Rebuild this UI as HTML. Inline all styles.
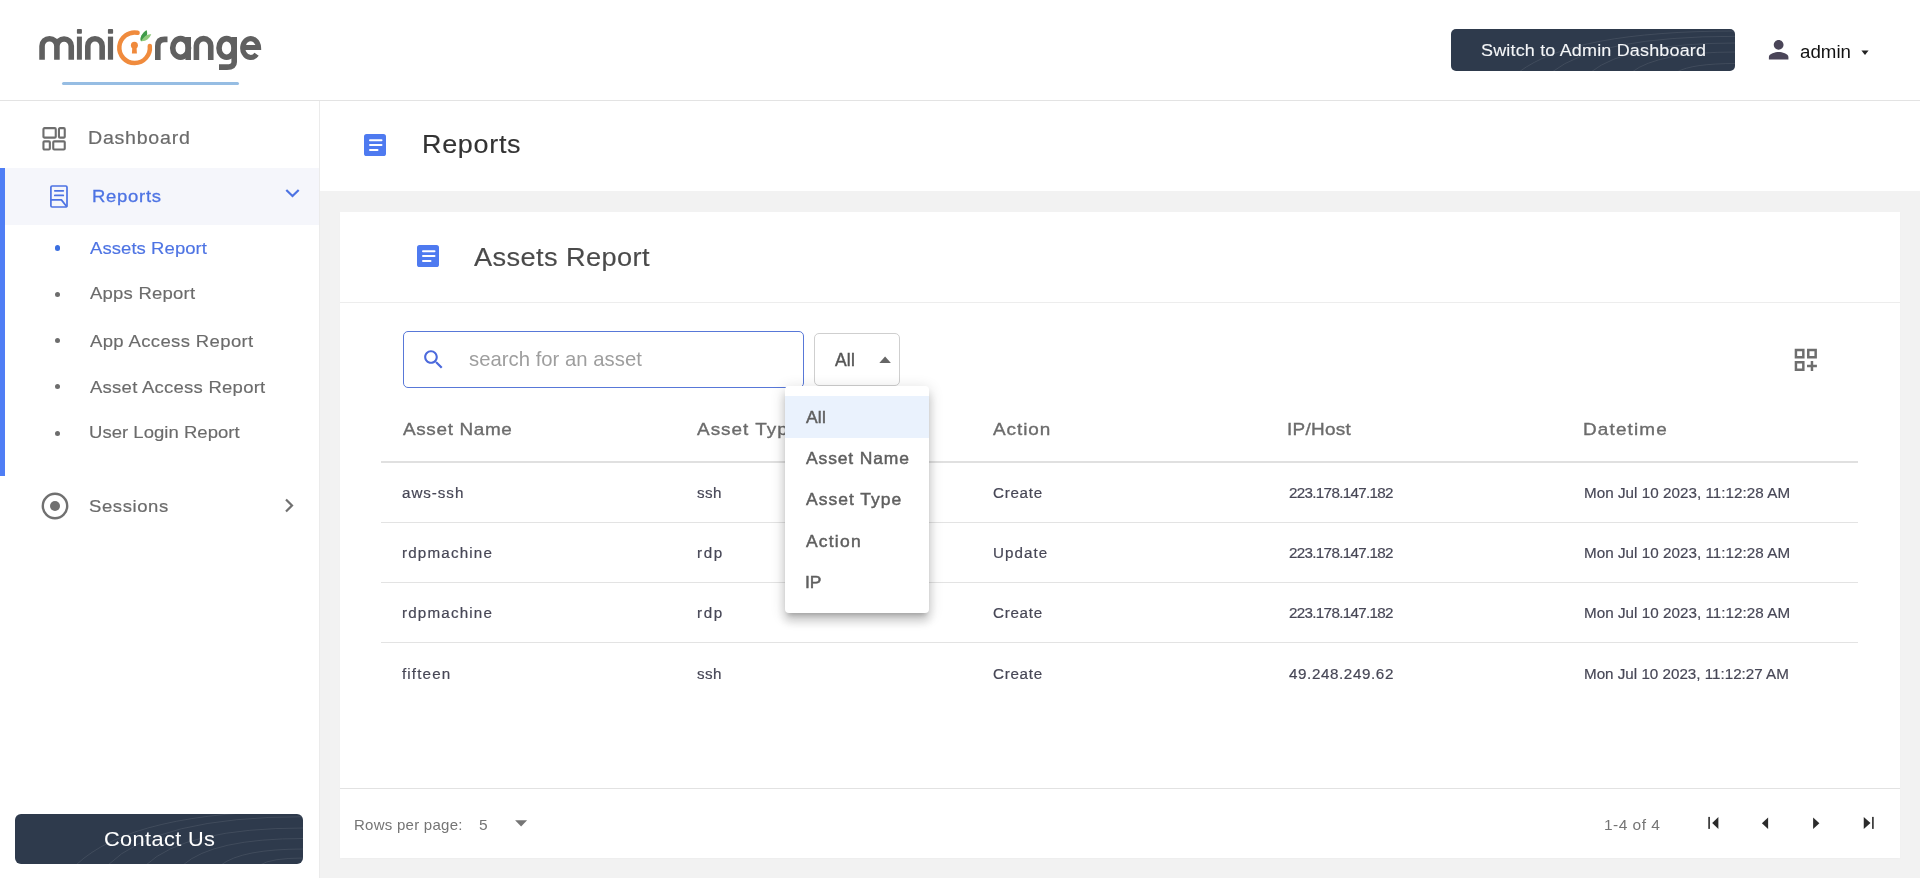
<!DOCTYPE html>
<html><head><meta charset="utf-8">
<style>
*{margin:0;padding:0;box-sizing:border-box}
html,body{width:1920px;height:878px;overflow:hidden;background:#f2f2f2;font-family:"Liberation Sans",sans-serif}
.a{position:absolute}
.t{position:absolute;white-space:nowrap;line-height:1;will-change:transform}
</style></head><body>
<div class="a" style="left:0px;top:0px;width:1920px;height:100px;background:#fff"></div>
<div class="a" style="left:0px;top:100px;width:1920px;height:1px;background:#e3e3e3"></div>
<div class="a" style="left:0px;top:101px;width:319px;height:777px;background:#fff"></div>
<div class="a" style="left:319px;top:101px;width:1px;height:777px;background:#ebebeb"></div>
<div class="a" style="left:320px;top:101px;width:1600px;height:90px;background:#fff"></div>
<div class="a" style="left:340px;top:212px;width:1560px;height:646px;background:#fff;box-shadow:0 1px 2px rgba(0,0,0,0.025)"></div>
<div class="a" style="left:340px;top:302px;width:1560px;height:1px;background:#ededed"></div>
<div class="a" style="left:340px;top:788px;width:1560px;height:1px;background:#e2e2e2"></div>
<svg class="a" style="left:0;top:0" width="300" height="100" viewBox="0 0 300 100">
 <g fill="none" stroke="#606060" stroke-width="5.6">
  <path d="M42.05,59.7 V46.1 A7.425,7.425 0 0 1 56.9,46.1 V59.7 M56.9,46.1 A7.175,7.175 0 0 1 71.25,46.1 V59.7"/>
  <path d="M87.8,59.7 V45.9 A7.175,7.175 0 0 1 102.15,45.9 V59.7"/>
  <path d="M157.8,60 V46 Q157.8,39.4 164.5,39.4 H167.5"/>
  <ellipse cx="180.6" cy="47.95" rx="7.9" ry="9.3"/>
  <path d="M188.2,37 V60"/>
  <path d="M196.4,60 V45.8 A7.175,7.175 0 0 1 210.75,45.8 V60"/>
  <ellipse cx="226.6" cy="47.95" rx="7.6" ry="9.3"/>
  <path d="M234.2,37 V62 Q234.2,67.1 227,67.1 H219"/>
  <path d="M242.5,47.5 H258.5 A7.875,9.45 0 1 0 256.6,54.2" stroke-width="5.2"/>
 </g>
 <g fill="#606060">
  <rect x="76.9" y="36.6" width="5" height="23.1"/><rect x="76.9" y="29.1" width="5" height="4.7" rx="0.8"/>
  <rect x="107.9" y="36.6" width="5.2" height="23.1"/><rect x="107.9" y="29.1" width="5.2" height="4.7" rx="0.8"/>
 </g>
 <path d="M137.6,32.75 A15.3,15.3 0 1 0 149.8,46.0" fill="none" stroke="#f08b3d" stroke-width="4.5" stroke-linecap="round"/>
 <circle cx="134.4" cy="45.3" r="3.5" fill="#f08a3c"/>
 <path d="M132.4,46 L131.9,53.6 H136.9 L136.4,46 Z" fill="#f08a3c"/>
 <path d="M141,41.3 C139.6,37.5 142,33.6 146.4,30.3 C147.3,32 147.3,33.8 146.9,35.1 C148.5,34.4 150,34.1 151.3,34.3 C149.6,38.2 146.5,41.6 141,41.3 Z" fill="#8fcb7c"/>
 <path d="M141,41.3 C139.6,37.5 142,33.6 146.4,30.3 C147.3,32 147.3,33.8 146.9,35.1 C144.8,36.3 142.8,38.6 141,41.3 Z" fill="#3f9a4a"/>
 <path d="M63.5,83.5 H237.5" stroke="#96bde3" stroke-width="3" stroke-linecap="round"/>
</svg>
<div class="a" style="left:1451px;top:29px;width:284px;height:42px;background:#2e3a4c;border-radius:5px;overflow:hidden"><svg class="a" style="left:0;top:0" width="284" height="42" viewBox="0 0 284 42"><g fill="none" stroke="#ffffff" stroke-opacity="0.09" stroke-width="1"><path d="M68.0,43 Q122.0,2.0 285,2.0"/><path d="M101.0,43 Q146.8,7.3 285,7.3"/><path d="M140.0,43 Q176.0,14.0 285,14.0"/><path d="M181.0,43 Q206.8,23.0 285,23.0"/><path d="M226.0,43 Q240.5,34.5 285,34.5"/></g></svg></div>
<div class="t" style="left:1480.80px;top:42.93px;font-size:16.8px;color:#f4f6f8;letter-spacing:0.171px;transform:scaleX(1.07);transform-origin:0 0;-webkit-text-stroke:0.1px #f4f6f8;">Switch to Admin Dashboard</div>
<svg class="a" style="left:1763.5px;top:35.4px" width="29.3" height="29.3" viewBox="0 0 24 24"><path fill="#4a4558" d="M12 12c2.21 0 4-1.79 4-4s-1.79-4-4-4-4 1.79-4 4 1.79 4 4 4zm0 2c-2.67 0-8 1.34-8 4v2h16v-2c0-2.66-5.33-4-8-4z"/></svg>
<div class="t" style="left:1799.80px;top:42.97px;font-size:18.7px;color:#111;letter-spacing:0.015px;">admin</div>
<svg class="a" style="left:1861px;top:50px" width="8" height="6" viewBox="0 0 8 6"><path d="M0.4,0.6 H7.6 L4,5 Z" fill="#222"/></svg>
<svg class="a" style="left:40px;top:125px" width="28" height="28" viewBox="0 0 28 28"><g fill="none" stroke="#6e6e6e" stroke-width="2.1"><rect x="3.45" y="3.15" width="12.3" height="9.5" rx="1"/><rect x="18.95" y="3.15" width="5.8" height="9.5" rx="1"/><rect x="3.45" y="16.35" width="6.4" height="8.1" rx="1"/><rect x="13.25" y="16.35" width="11.5" height="8.1" rx="1"/></g></svg>
<div class="t" style="left:87.50px;top:129.68px;font-size:17.5px;color:#6b6b6b;letter-spacing:0.660px;transform:scaleX(1.12);transform-origin:0 0;-webkit-text-stroke:0.2px #6b6b6b;">Dashboard</div>
<div class="a" style="left:0px;top:168px;width:319px;height:57px;background:#f5f6fb"></div>
<div class="a" style="left:0px;top:168px;width:5px;height:308px;background:#4f7ef5"></div>
<svg class="a" style="left:48px;top:183px" width="22" height="27" viewBox="0 0 22 27"><g fill="none" stroke="#4d73e3" stroke-width="1.7" stroke-linejoin="round"><rect x="2.9" y="3.0" width="16.1" height="21.0" rx="1.2"/><path d="M6.8,7.8 H15.3 M6.8,12.4 H15.3" stroke-linecap="round"/><path d="M2.9,16.9 H13.4 L19,24"/></g></svg>
<div class="t" style="left:92.20px;top:188.05px;font-size:17.3px;color:#4d73e3;letter-spacing:0.669px;transform:scaleX(1.07);transform-origin:0 0;-webkit-text-stroke:0.3px #4d73e3;">Reports</div>
<svg class="a" style="left:282px;top:186px" width="20" height="14" viewBox="0 0 20 14"><path d="M4.3,4 L10.5,10 L16.7,4" fill="none" stroke="#4d73e3" stroke-width="2.2"/></svg>
<div class="t" style="left:90.30px;top:239.75px;font-size:17.3px;color:#4d73e3;letter-spacing:0.066px;transform:scaleX(1.07);transform-origin:0 0;-webkit-text-stroke:0.15px #4d73e3;">Assets Report</div>
<div class="a" style="left:55px;top:245.4px;width:5.2px;height:5.2px;border-radius:50%;background:#3b6fe0"></div>
<div class="t" style="left:90.30px;top:285.15px;font-size:17.3px;color:#6b6b6b;letter-spacing:0.215px;transform:scaleX(1.07);transform-origin:0 0;-webkit-text-stroke:0.15px #6b6b6b;">Apps Report</div>
<div class="a" style="left:55px;top:291.7px;width:5.2px;height:5.2px;border-radius:50%;background:#6d6d6d"></div>
<div class="t" style="left:90.20px;top:333.25px;font-size:17.3px;color:#6b6b6b;letter-spacing:0.349px;transform:scaleX(1.07);transform-origin:0 0;-webkit-text-stroke:0.15px #6b6b6b;">App Access Report</div>
<div class="a" style="left:55px;top:338.3px;width:5.2px;height:5.2px;border-radius:50%;background:#6d6d6d"></div>
<div class="t" style="left:90.20px;top:379.00px;font-size:17.3px;color:#6b6b6b;letter-spacing:0.240px;transform:scaleX(1.07);transform-origin:0 0;-webkit-text-stroke:0.15px #6b6b6b;">Asset Access Report</div>
<div class="a" style="left:55px;top:384.3px;width:5.2px;height:5.2px;border-radius:50%;background:#6d6d6d"></div>
<div class="t" style="left:88.60px;top:424.45px;font-size:17.3px;color:#6b6b6b;letter-spacing:0.034px;transform:scaleX(1.07);transform-origin:0 0;-webkit-text-stroke:0.15px #6b6b6b;">User Login Report</div>
<div class="a" style="left:55px;top:430.6px;width:5.2px;height:5.2px;border-radius:50%;background:#6d6d6d"></div>
<svg class="a" style="left:40px;top:491px" width="30" height="30" viewBox="0 0 30 30"><circle cx="15" cy="15" r="12.2" fill="none" stroke="#707070" stroke-width="2.4"/><circle cx="15" cy="15" r="5" fill="#707070"/></svg>
<div class="t" style="left:89.00px;top:497.85px;font-size:17.3px;color:#6b6b6b;letter-spacing:0.558px;transform:scaleX(1.07);transform-origin:0 0;-webkit-text-stroke:0.2px #6b6b6b;">Sessions</div>
<svg class="a" style="left:280px;top:495px" width="18" height="20" viewBox="0 0 18 20"><path d="M6,4.5 L12,10.5 L6,16.5" fill="none" stroke="#707070" stroke-width="2.2"/></svg>
<div class="a" style="left:15px;top:814px;width:288px;height:50px;background:#2e3a4c;border-radius:6px;overflow:hidden"><svg class="a" style="left:0;top:0" width="288" height="50" viewBox="0 0 288 50"><g fill="none" stroke="#ffffff" stroke-opacity="0.09" stroke-width="1"><path d="M61.0,51 Q117.8,-3.0 289,-3.0"/><path d="M93.0,51 Q141.8,2.7 289,2.7"/><path d="M131.0,51 Q170.2,14.0 289,14.0"/><path d="M168.0,51 Q198.0,24.5 289,24.5"/><path d="M206.0,51 Q226.5,35.0 289,35.0"/><path d="M245.0,51 Q255.8,44.0 289,44.0"/></g></svg></div>
<div class="t" style="left:104.00px;top:829.06px;font-size:20.3px;color:#fff;letter-spacing:0.371px;transform:scaleX(1.07);transform-origin:0 0;-webkit-text-stroke:0.05px #fff;">Contact Us</div>
<svg class="a" style="left:364px;top:134px" width="22" height="22" viewBox="0 0 22 22"><rect x="0" y="0" width="22" height="22" rx="2.6" fill="#4e7af0"/><path d="M6,6.2 H17.5 M6,11 H17.5 M6,16 H13.5" stroke="#fff" stroke-width="2" stroke-linecap="round"/></svg>
<div class="t" style="left:421.60px;top:131.67px;font-size:25.2px;color:#333;letter-spacing:0.654px;transform:scaleX(1.07);transform-origin:0 0;-webkit-text-stroke:0.15px #333;">Reports</div>
<svg class="a" style="left:417px;top:245px" width="22" height="22" viewBox="0 0 22 22"><rect x="0" y="0" width="22" height="22" rx="2.6" fill="#4e7af0"/><path d="M6,6.2 H17.5 M6,11 H17.5 M6,16 H13.5" stroke="#fff" stroke-width="2" stroke-linecap="round"/></svg>
<div class="t" style="left:473.60px;top:245.20px;font-size:25.4px;color:#4a4a4a;letter-spacing:0.376px;transform:scaleX(1.07);transform-origin:0 0;-webkit-text-stroke:0.15px #4a4a4a;">Assets Report</div>
<div class="a" style="left:403px;top:331px;width:401px;height:57px;border:1px solid #5878d8;border-radius:5px;background:#fff"></div>
<svg class="a" style="left:420.7px;top:346.8px" width="25.2" height="25.2" viewBox="0 0 24 24"><path fill="#4b69dc" d="M15.5 14h-.79l-.28-.27C15.41 12.59 16 11.11 16 9.5 16 5.91 13.09 3 9.5 3S3 5.91 3 9.5 5.91 16 9.5 16c1.61 0 3.09-.59 4.23-1.57l.27.28v.79l5 4.99L20.49 19l-4.99-5zm-6 0C7.01 14 5 11.99 5 9.5S7.01 5 9.5 5 14 7.01 14 9.5 11.99 14 9.5 14z"/></svg>
<div class="t" style="left:469.10px;top:348.71px;font-size:20.3px;color:#9e9e9e;letter-spacing:0.020px;">search for an asset</div>
<div class="a" style="left:814px;top:333px;width:86px;height:53px;border:1px solid #cfcfcf;border-radius:5px;background:#fff"></div>
<div class="t" style="left:834.70px;top:352.08px;font-size:17.5px;color:#555;letter-spacing:0.179px;-webkit-text-stroke:0.4px #555;">All</div>
<svg class="a" style="left:878px;top:355px" width="14" height="9" viewBox="0 0 14 9"><path d="M1.3,8 H12.9 L7.1,1.6 Z" fill="#666"/></svg>
<svg class="a" style="left:1790.5px;top:344.7px" width="29.6" height="29.6" viewBox="0 0 24 24"><path fill="#6e6e6e" d="M3 11h8V3H3v8zm2-6h4v4H5V5zm8-2v8h8V3h-8zm6 6h-4V5h4v4zM3 21h8v-8H3v8zm2-6h4v4H5v-4zm13-2h-2v3h-3v2h3v3h2v-3h3v-2h-3z"/></svg>
<div class="a" style="left:381px;top:461px;width:1477px;height:2px;background:#e0e0e0"></div>
<div class="a" style="left:381px;top:522px;width:1477px;height:1px;background:#e3e3e3"></div>
<div class="a" style="left:381px;top:582px;width:1477px;height:1px;background:#e3e3e3"></div>
<div class="a" style="left:381px;top:642px;width:1477px;height:1px;background:#e3e3e3"></div>
<div class="t" style="left:402.60px;top:421.99px;font-size:16.9px;color:#6b6b6b;letter-spacing:0.577px;transform:scaleX(1.12);transform-origin:0 0;-webkit-text-stroke:0.35px #6b6b6b;">Asset Name</div>
<div class="t" style="left:697.30px;top:421.99px;font-size:16.9px;color:#6b6b6b;transform:scaleX(1.12);transform-origin:0 0;-webkit-text-stroke:0.35px #6b6b6b;letter-spacing:0.9px;">Asset Type</div>
<div class="t" style="left:992.80px;top:421.99px;font-size:16.9px;color:#6b6b6b;letter-spacing:0.839px;transform:scaleX(1.12);transform-origin:0 0;-webkit-text-stroke:0.35px #6b6b6b;">Action</div>
<div class="t" style="left:1287.20px;top:421.99px;font-size:16.9px;color:#6b6b6b;letter-spacing:0.258px;transform:scaleX(1.12);transform-origin:0 0;-webkit-text-stroke:0.35px #6b6b6b;">IP/Host</div>
<div class="t" style="left:1582.75px;top:421.99px;font-size:16.9px;color:#6b6b6b;letter-spacing:1.023px;transform:scaleX(1.12);transform-origin:0 0;-webkit-text-stroke:0.35px #6b6b6b;">Datetime</div>
<div class="t" style="left:401.90px;top:484.83px;font-size:15.2px;color:#474756;letter-spacing:0.941px;-webkit-text-stroke:0.2px #474756;">aws-ssh</div>
<div class="t" style="left:697.30px;top:484.83px;font-size:15.2px;color:#474756;letter-spacing:0.424px;-webkit-text-stroke:0.2px #474756;">ssh</div>
<div class="t" style="left:992.80px;top:484.83px;font-size:15.2px;color:#474756;letter-spacing:0.717px;-webkit-text-stroke:0.2px #474756;">Create</div>
<div class="t" style="left:1288.70px;top:484.83px;font-size:15.2px;color:#474756;letter-spacing:-0.679px;-webkit-text-stroke:0.2px #474756;">223.178.147.182</div>
<div class="t" style="left:1583.75px;top:484.83px;font-size:15.2px;color:#474756;letter-spacing:0.044px;-webkit-text-stroke:0.2px #474756;">Mon Jul 10 2023, 11:12:28 AM</div>
<div class="t" style="left:401.90px;top:545.33px;font-size:15.2px;color:#474756;letter-spacing:1.176px;-webkit-text-stroke:0.2px #474756;">rdpmachine</div>
<div class="t" style="left:697.30px;top:545.33px;font-size:15.2px;color:#474756;letter-spacing:1.668px;-webkit-text-stroke:0.2px #474756;">rdp</div>
<div class="t" style="left:992.80px;top:545.33px;font-size:15.2px;color:#474756;letter-spacing:1.036px;-webkit-text-stroke:0.2px #474756;">Update</div>
<div class="t" style="left:1288.70px;top:545.33px;font-size:15.2px;color:#474756;letter-spacing:-0.679px;-webkit-text-stroke:0.2px #474756;">223.178.147.182</div>
<div class="t" style="left:1583.75px;top:545.33px;font-size:15.2px;color:#474756;letter-spacing:0.044px;-webkit-text-stroke:0.2px #474756;">Mon Jul 10 2023, 11:12:28 AM</div>
<div class="t" style="left:401.90px;top:605.03px;font-size:15.2px;color:#474756;letter-spacing:1.176px;-webkit-text-stroke:0.2px #474756;">rdpmachine</div>
<div class="t" style="left:697.30px;top:605.03px;font-size:15.2px;color:#474756;letter-spacing:1.668px;-webkit-text-stroke:0.2px #474756;">rdp</div>
<div class="t" style="left:992.80px;top:605.03px;font-size:15.2px;color:#474756;letter-spacing:0.717px;-webkit-text-stroke:0.2px #474756;">Create</div>
<div class="t" style="left:1288.70px;top:605.03px;font-size:15.2px;color:#474756;letter-spacing:-0.679px;-webkit-text-stroke:0.2px #474756;">223.178.147.182</div>
<div class="t" style="left:1583.75px;top:605.03px;font-size:15.2px;color:#474756;letter-spacing:0.044px;-webkit-text-stroke:0.2px #474756;">Mon Jul 10 2023, 11:12:28 AM</div>
<div class="t" style="left:401.90px;top:666.03px;font-size:15.2px;color:#474756;letter-spacing:1.133px;-webkit-text-stroke:0.2px #474756;">fifteen</div>
<div class="t" style="left:697.30px;top:666.03px;font-size:15.2px;color:#474756;letter-spacing:0.424px;-webkit-text-stroke:0.2px #474756;">ssh</div>
<div class="t" style="left:992.80px;top:666.03px;font-size:15.2px;color:#474756;letter-spacing:0.717px;-webkit-text-stroke:0.2px #474756;">Create</div>
<div class="t" style="left:1288.70px;top:666.03px;font-size:15.2px;color:#474756;letter-spacing:0.600px;-webkit-text-stroke:0.2px #474756;">49.248.249.62</div>
<div class="t" style="left:1583.75px;top:666.03px;font-size:15.2px;color:#474756;letter-spacing:-0.002px;-webkit-text-stroke:0.2px #474756;">Mon Jul 10 2023, 11:12:27 AM</div>
<div class="t" style="left:354.40px;top:817.00px;font-size:15px;color:#757575;letter-spacing:0.257px;">Rows per page:</div>
<div class="t" style="left:479.20px;top:816.78px;font-size:15.5px;color:#757575;">5</div>
<svg class="a" style="left:514px;top:819px" width="14" height="9" viewBox="0 0 14 9"><path d="M1.1,1.3 H13.1 L7.1,7.6 Z" fill="#757575"/></svg>
<div class="t" style="left:1603.60px;top:817.18px;font-size:15.5px;color:#757575;letter-spacing:0.463px;">1-4 of 4</div>
<svg class="a" style="left:1700px;top:810px" width="180" height="26" viewBox="0 0 180 26"><g fill="#2b2b2b">
<rect x="8.3" y="6.9" width="1.6" height="12"/><path d="M18.4,6.9 V18.9 L12.2,12.9 Z"/>
<path d="M68.1,7.5 V19 L61.9,13.2 Z"/>
<path d="M113.1,7.5 V19 L119.4,13.2 Z"/>
<path d="M163.75,6.9 V18.9 L170.5,12.9 Z"/><rect x="172.1" y="6.9" width="1.6" height="12"/>
</g></svg>
<div class="a" style="left:785px;top:386px;width:144px;height:227px;background:#fff;border-radius:4px;box-shadow:0 5px 5px -3px rgba(0,0,0,.2),0 8px 10px 1px rgba(0,0,0,.14),0 3px 14px 2px rgba(0,0,0,.12)"></div>
<div class="a" style="left:785px;top:396px;width:144px;height:42px;background:#eaf2fd"></div>
<div class="t" style="left:805.50px;top:408.93px;font-size:16.5px;color:#5f5f5f;letter-spacing:0.174px;transform:scaleX(1.06);transform-origin:0 0;-webkit-text-stroke:0.45px #5f5f5f;">All</div>
<div class="t" style="left:805.60px;top:449.93px;font-size:16.5px;color:#5f5f5f;letter-spacing:0.812px;transform:scaleX(1.06);transform-origin:0 0;-webkit-text-stroke:0.45px #5f5f5f;">Asset Name</div>
<div class="t" style="left:805.60px;top:491.03px;font-size:16.5px;color:#5f5f5f;letter-spacing:0.953px;transform:scaleX(1.06);transform-origin:0 0;-webkit-text-stroke:0.45px #5f5f5f;">Asset Type</div>
<div class="t" style="left:805.60px;top:532.53px;font-size:16.5px;color:#5f5f5f;letter-spacing:1.131px;transform:scaleX(1.06);transform-origin:0 0;-webkit-text-stroke:0.45px #5f5f5f;">Action</div>
<div class="t" style="left:804.60px;top:574.03px;font-size:16.5px;color:#5f5f5f;transform:scaleX(1.06);transform-origin:0 0;-webkit-text-stroke:0.45px #5f5f5f;">IP</div>
</body></html>
